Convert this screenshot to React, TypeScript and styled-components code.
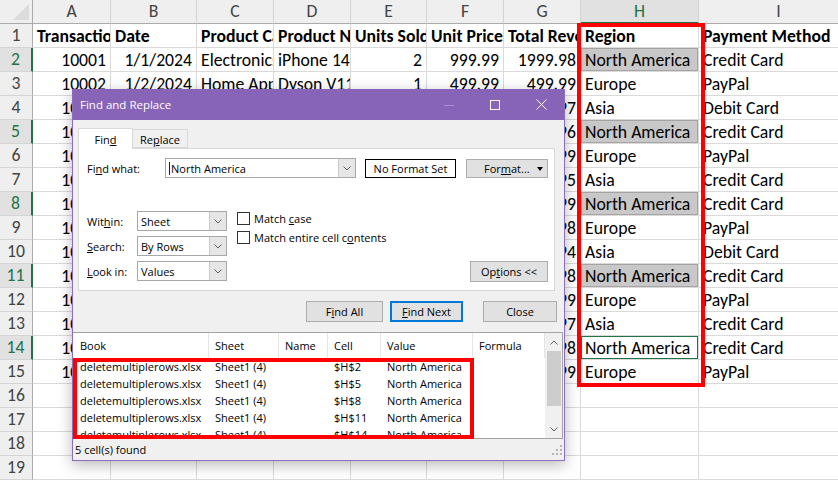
import React from "react";
import styled, { createGlobalStyle, css } from "styled-components";

type Align = "left" | "right" | "center";

const GlobalStyle = createGlobalStyle`
  html, body {
    margin: 0;
    padding: 0;
    background: #ffffff;
    overflow: hidden;
  }
  body {
    font-family: Calibri, Lato, "Liberation Sans", sans-serif;
  }
`;

const colWidths = [78, 86, 77, 77, 76, 77, 77, 118, 160];
const letters = ["A", "B", "C", "D", "E", "F", "G", "H", "I"];

const rows: string[][] = [
  ["Transaction ID", "Date", "Product Category", "Product Name", "Units Sold", "Unit Price", "Total Revenue", "Region", "Payment Method"],
  ["10001", "1/1/2024", "Electronics", "iPhone 14", "2", "999.99", "1999.98", "North America", "Credit Card"],
  ["10002", "1/2/2024", "Home Appliances", "Dyson V11", "1", "499.99", "499.99", "Europe", "PayPal"],
  ["10003", "1/3/2024", "Clothing", "Levi's 501", "3", "59.99", "179.97", "Asia", "Debit Card"],
  ["10004", "1/4/2024", "Books", "Dune", "4", "15.99", "63.96", "North America", "Credit Card"],
  ["10005", "1/5/2024", "Beauty", "Skincare Set", "1", "89.99", "89.99", "Europe", "PayPal"],
  ["10006", "1/6/2024", "Sports", "Wilson Ball", "5", "29.99", "149.95", "Asia", "Credit Card"],
  ["10007", "1/7/2024", "Electronics", "MacBook Pro", "1", "2499.99", "2499.99", "North America", "Credit Card"],
  ["10008", "1/8/2024", "Home Appliances", "Blueair", "2", "599.99", "1199.98", "Europe", "PayPal"],
  ["10009", "1/9/2024", "Clothing", "Nike Air", "6", "89.99", "539.94", "Asia", "Debit Card"],
  ["10010", "1/10/2024", "Books", "Atomic Habits", "2", "25.99", "51.98", "North America", "Credit Card"],
  ["10011", "1/11/2024", "Beauty", "Chanel No. 5", "1", "129.99", "129.99", "Europe", "PayPal"],
  ["10012", "1/12/2024", "Sports", "Babolat Pure", "3", "199.99", "599.97", "Asia", "Credit Card"],
  ["10013", "1/13/2024", "Electronics", "Galaxy S23", "2", "1099.99", "2199.98", "North America", "Credit Card"],
  ["10014", "1/14/2024", "Home Appliances", "Keurig", "1", "199.99", "199.99", "Europe", "PayPal"],
  ["", "", "", "", "", "", "", "", ""],
  ["", "", "", "", "", "", "", "", ""],
  ["", "", "", "", "", "", "", "", ""],
  ["", "", "", "", "", "", "", "", ""],
];

const foundRows = [2, 5, 8, 11, 14];
const currentRow = 14;

const results = [
  { book: "deletemultiplerows.xlsx", sheet: "Sheet1 (4)", name: "", cell: "$H$2", value: "North America" },
  { book: "deletemultiplerows.xlsx", sheet: "Sheet1 (4)", name: "", cell: "$H$5", value: "North America" },
  { book: "deletemultiplerows.xlsx", sheet: "Sheet1 (4)", name: "", cell: "$H$8", value: "North America" },
  { book: "deletemultiplerows.xlsx", sheet: "Sheet1 (4)", name: "", cell: "$H$11", value: "North America" },
  { book: "deletemultiplerows.xlsx", sheet: "Sheet1 (4)", name: "", cell: "$H$14", value: "North America" },
];

const resultCols = [135, 70, 49, 53, 92, 72];

/* ---------- spreadsheet ---------- */

const Page = styled.div`
  position: relative;
  width: 838px;
  height: 480px;
  overflow: hidden;
`;

const Sheet = styled.div`
  display: grid;
  grid-template-columns: 33px ${colWidths.map((w) => `${w}px`).join(" ")};
  grid-auto-rows: 24px;
  font-size: 17.7px;
`;

const Corner = styled.div`
  position: relative;
  background: #efefef;
  border-right: 1px solid #ababab;
  border-bottom: 1px solid #ababab;
  box-sizing: border-box;

  &::after {
    content: "";
    position: absolute;
    right: 3px;
    bottom: 3px;
    width: 16px;
    height: 16px;
    background: #dcdcdc;
    clip-path: polygon(100% 0, 100% 100%, 0 100%);
  }
`;

const ColHeader = styled.div<{ $active?: boolean }>`
  box-sizing: border-box;
  background: ${(p) => (p.$active ? "#e1e1e1" : "#efefef")};
  color: ${(p) => (p.$active ? "#217346" : "#444444")};
  border-right: 1px solid #d4d4d4;
  border-bottom: ${(p) => (p.$active ? "2px solid #217346" : "1px solid #ababab")};
  text-align: center;
  line-height: 23px;
`;

const RowHeader = styled.div<{ $active?: boolean }>`
  box-sizing: border-box;
  background: ${(p) => (p.$active ? "#e1e1e1" : "#efefef")};
  color: ${(p) => (p.$active ? "#217346" : "#444444")};
  border-bottom: 1px solid #d4d4d4;
  border-right: ${(p) => (p.$active ? "2px solid #217346" : "1px solid #ababab")};
  text-align: center;
  line-height: 23px;
`;

const Cell = styled.div<{ $align: Align; $bold?: boolean; $found?: boolean; $current?: boolean }>`
  box-sizing: border-box;
  border-right: 1px solid #dadada;
  border-bottom: 1px solid #dadada;
  padding: 0 4px;
  line-height: 24px;
  white-space: nowrap;
  overflow: hidden;
  color: #000000;
  text-align: ${(p) => p.$align};
  font-weight: ${(p) => (p.$bold ? 700 : 400)};
  ${(p) =>
    p.$found &&
    css`
      background: #c8c8c8;
      box-shadow: inset 0 0 0 1px #a4a4a4;
    `}
  ${(p) =>
    p.$current &&
    css`
      box-shadow: inset 0 0 0 1px #217346;
    `}
`;

const ColumnMark = styled.div`
  position: absolute;
  left: 577px;
  top: 23px;
  width: 128px;
  height: 364px;
  box-sizing: border-box;
  border: 4px solid #ff0000;
  pointer-events: none;
`;

/* ---------- dialog ---------- */

const Dialog = styled.div`
  position: absolute;
  left: 72px;
  top: 89px;
  width: 493px;
  height: 372px;
  box-sizing: border-box;
  border: 1px solid #8a6fbd;
  border-top: none;
  background: #f0f0f0;
  box-shadow: 0 4px 14px rgba(0, 0, 0, 0.28);
  display: flex;
  flex-direction: column;
  font-family: "Segoe UI", "Open Sans", "Noto Sans", sans-serif;
  font-size: 11px;
  color: #000000;
`;

const TitleBar = styled.div`
  height: 31px;
  flex: none;
  background: #8764b8;
  color: #ffffff;
  display: flex;
  align-items: center;
  padding-left: 7px;
  font-size: 11.5px;
`;

const Title = styled.div`
  flex: 1;
`;

const WinButton = styled.div`
  width: 46px;
  height: 31px;
  display: flex;
  align-items: center;
  justify-content: center;
`;

const Body = styled.div`
  flex: 1;
  display: flex;
  flex-direction: column;
`;

const TabStrip = styled.div`
  display: flex;
  align-items: flex-end;
  height: 20px;
  margin: 8px 0 0 5px;
  position: relative;
  z-index: 1;
`;

const Tab = styled.div<{ $selected?: boolean }>`
  box-sizing: border-box;
  width: 55px;
  height: ${(p) => (p.$selected ? "21px" : "19px")};
  margin-bottom: ${(p) => (p.$selected ? "-1px" : "0")};
  background: ${(p) => (p.$selected ? "#ffffff" : "#f0f0f0")};
  border: 1px solid #d9d9d9;
  border-bottom: ${(p) => (p.$selected ? "none" : "1px solid #d9d9d9")};
  ${(p) => !p.$selected && "border-left: none;"}
  display: flex;
  align-items: center;
  justify-content: center;
  padding-top: ${(p) => (p.$selected ? "0" : "1px")};
`;

const Panel = styled.div`
  box-sizing: border-box;
  width: 477px;
  height: 143px;
  margin-left: 5px;
  background: #ffffff;
  border: 1px solid #d9d9d9;
  padding: 9px 6px 8px 8px;
  display: flex;
  flex-direction: column;
`;

const FindRow = styled.div`
  display: flex;
  align-items: center;
  height: 20px;
`;

const FieldLabel = styled.div<{ $width: number }>`
  width: ${(p) => p.$width}px;
  flex: none;
  white-space: nowrap;
`;

const Combo = styled.div<{ $width: number }>`
  box-sizing: border-box;
  width: ${(p) => p.$width}px;
  height: 20px;
  border: 1px solid #a8a8a8;
  background: #ffffff;
  display: flex;
  align-items: center;
  flex: none;
`;

const ComboText = styled.div`
  flex: 1;
  padding-left: 3px;
  white-space: nowrap;
  display: flex;
  align-items: center;
`;

const Caret = styled.span`
  display: inline-block;
  width: 1px;
  height: 13px;
  background: #2b1b3d;
  margin-right: 1px;
`;

const DropButton = styled.div`
  width: 16px;
  height: 18px;
  background: #e6e6e6;
  border-left: 1px solid #c9c9c9;
  display: flex;
  align-items: center;
  justify-content: center;
`;

const FormatPreview = styled.div`
  box-sizing: border-box;
  width: 91px;
  height: 19px;
  margin-left: 9px;
  border: 1px solid #000000;
  display: flex;
  align-items: center;
  justify-content: center;
`;

const Button = styled.div<{ $width: number; $default?: boolean }>`
  box-sizing: border-box;
  width: ${(p) => p.$width}px;
  height: 21px;
  flex: none;
  background: #e1e1e1;
  border: ${(p) => (p.$default ? "2px solid #0078d7" : "1px solid #adadad")};
  display: flex;
  align-items: center;
  justify-content: center;
  white-space: nowrap;
`;

const FormatButton = styled(Button)`
  height: 19px;
  margin-left: 10px;
  justify-content: flex-start;
  padding-left: 17px;
  position: relative;
`;

const SplitArrow = styled.span`
  position: absolute;
  right: 4px;
  top: 7px;
  width: 0;
  height: 0;
  border-left: 3px solid transparent;
  border-right: 3px solid transparent;
  border-top: 4px solid #000000;
`;

const OptionsArea = styled.div`
  display: flex;
  align-items: flex-start;
  margin-top: 33px;
  flex: 1;
`;

const OptionGrid = styled.div`
  display: grid;
  grid-template-columns: 50px 90px;
  grid-auto-rows: 20px;
  row-gap: 5px;
  align-items: center;
`;

const Checks = styled.div`
  display: flex;
  flex-direction: column;
  gap: 6px;
  margin: 1px 0 0 10px;
`;

const CheckRow = styled.label`
  display: flex;
  align-items: center;
  height: 13px;
  gap: 4px;
  white-space: nowrap;
`;

const Box = styled.span`
  box-sizing: border-box;
  width: 13px;
  height: 13px;
  border: 1px solid #333333;
  background: #ffffff;
  flex: none;
`;

const OptionsButton = styled(Button)`
  margin-left: auto;
  align-self: flex-end;
`;

const ButtonRow = styled.div`
  display: flex;
  justify-content: flex-end;
  gap: 7px;
  margin: 10px 7px 0 0;
  height: 21px;
`;

const CloseGap = styled.div`
  width: 6px;
`;

const Results = styled.div`
  position: relative;
  box-sizing: border-box;
  margin: 10px 1px 0 0;
  height: 107px;
  border: 1px solid #a3a3a3;
  border-left: none;
  background: #ffffff;
  display: flex;
`;

const ResultsTable = styled.div`
  flex: 1;
  overflow: hidden;
  padding-left: 1px;
`;

const HeaderRow = styled.div`
  display: flex;
  height: 25px;
`;

const HeaderCell = styled.div<{ $width: number }>`
  box-sizing: border-box;
  width: ${(p) => p.$width}px;
  flex: none;
  padding-left: 6px;
  border-right: 1px solid #e5e5e5;
  display: flex;
  align-items: center;
`;

const DataRow = styled.div`
  display: flex;
  height: 17px;
  align-items: center;
`;

const DataCell = styled.div<{ $width: number }>`
  width: ${(p) => p.$width}px;
  flex: none;
  padding-left: 6px;
  box-sizing: border-box;
  white-space: nowrap;
  overflow: hidden;
`;

const ScrollBar = styled.div`
  width: 17px;
  background: #f0f0f0;
  display: flex;
  flex-direction: column;
  align-items: center;
`;

const ScrollArrow = styled.div`
  height: 18px;
  width: 17px;
  display: flex;
  align-items: center;
  justify-content: center;
`;

const Thumb = styled.div`
  width: 14px;
  height: 55px;
  background: #cdcdcd;
`;

const ScrollTrack = styled.div`
  flex: 1;
`;

const ResultsMark = styled.div`
  position: absolute;
  left: 0;
  top: 25px;
  width: 401px;
  height: 81px;
  box-sizing: border-box;
  border: 4px solid #ff0000;
  pointer-events: none;
`;

const StatusBar = styled.div`
  height: 21px;
  display: flex;
  align-items: center;
  justify-content: space-between;
  padding: 0 2px 0 2px;
`;

const Accel = styled.span`
  text-decoration: underline;
  text-underline-offset: 1px;
`;

function Chevron({ up }: { up?: boolean }) {
  const pts = up ? "0.5,4.5 4,1 7.5,4.5" : "0.5,0.5 4,4 7.5,0.5";
  return (
    <svg width="8" height="5" viewBox="0 0 8 5">
      <polyline points={pts} fill="none" stroke="#606060" strokeWidth="1" />
    </svg>
  );
}

function Select({ value, width }: { value: string; width: number }) {
  return (
    <Combo $width={width}>
      <ComboText>{value}</ComboText>
      <DropButton>
        <Chevron />
      </DropButton>
    </Combo>
  );
}

function Grip() {
  const dots = [
    [8, 0],
    [4, 4],
    [8, 4],
    [0, 8],
    [4, 8],
    [8, 8],
  ];
  return (
    <svg width="10" height="10" viewBox="0 0 10 10">
      {dots.map(([x, y]) => (
        <rect key={`${x}-${y}`} x={x} y={y} width="2" height="2" fill="#b4b4b4" />
      ))}
    </svg>
  );
}

function FindReplaceDialog() {
  return (
    <Dialog>
      <TitleBar>
        <Title>Find and Replace</Title>
        <WinButton>
          <svg width="10" height="10" viewBox="0 0 10 10">
            <line x1="0" y1="5.5" x2="10" y2="5.5" stroke="#a991d0" strokeWidth="1" />
          </svg>
        </WinButton>
        <WinButton>
          <svg width="10" height="10" viewBox="0 0 10 10">
            <rect x="0.5" y="0.5" width="9" height="9" fill="none" stroke="#ffffff" strokeWidth="1" />
          </svg>
        </WinButton>
        <WinButton>
          <svg width="11" height="11" viewBox="0 0 11 11">
            <path d="M0.5 0.5 L10.5 10.5 M10.5 0.5 L0.5 10.5" stroke="#ffffff" strokeWidth="1" />
          </svg>
        </WinButton>
      </TitleBar>
      <Body>
        <TabStrip>
          <Tab $selected>
            <span>
              Fin<Accel>d</Accel>
            </span>
          </Tab>
          <Tab>
            <span>
              Re<Accel>p</Accel>lace
            </span>
          </Tab>
        </TabStrip>
        <Panel>
          <FindRow>
            <FieldLabel $width={78}>
              Fi<Accel>n</Accel>d what:
            </FieldLabel>
            <Combo $width={191}>
              <ComboText>
                <Caret />
                North America
              </ComboText>
              <DropButton>
                <Chevron />
              </DropButton>
            </Combo>
            <FormatPreview>No Format Set</FormatPreview>
            <FormatButton $width={82}>
              <span>
                For<Accel>m</Accel>at...
              </span>
              <SplitArrow />
            </FormatButton>
          </FindRow>
          <OptionsArea>
            <OptionGrid>
              <FieldLabel $width={50}>
                Wit<Accel>h</Accel>in:
              </FieldLabel>
              <Select value="Sheet" width={90} />
              <FieldLabel $width={50}>
                <Accel>S</Accel>earch:
              </FieldLabel>
              <Select value="By Rows" width={90} />
              <FieldLabel $width={50}>
                <Accel>L</Accel>ook in:
              </FieldLabel>
              <Select value="Values" width={90} />
            </OptionGrid>
            <Checks>
              <CheckRow>
                <Box />
                <span>
                  Match <Accel>c</Accel>ase
                </span>
              </CheckRow>
              <CheckRow>
                <Box />
                <span>
                  Match entire cell c<Accel>o</Accel>ntents
                </span>
              </CheckRow>
            </Checks>
            <OptionsButton $width={78}>
              <span>
                Op<Accel>t</Accel>ions &lt;&lt;
              </span>
            </OptionsButton>
          </OptionsArea>
        </Panel>
        <ButtonRow>
          <Button $width={77}>
            <span>
              F<Accel>i</Accel>nd All
            </span>
          </Button>
          <Button $width={73} $default>
            <span>
              <Accel>F</Accel>ind Next
            </span>
          </Button>
          <CloseGap />
          <Button $width={74}>Close</Button>
        </ButtonRow>
        <Results>
          <ResultsTable>
            <HeaderRow>
              {["Book", "Sheet", "Name", "Cell", "Value", "Formula"].map((h, i) => (
                <HeaderCell key={h} $width={resultCols[i]}>
                  {h}
                </HeaderCell>
              ))}
            </HeaderRow>
            {results.map((r) => (
              <DataRow key={r.cell}>
                <DataCell $width={resultCols[0]}>{r.book}</DataCell>
                <DataCell $width={resultCols[1]}>{r.sheet}</DataCell>
                <DataCell $width={resultCols[2]}>{r.name}</DataCell>
                <DataCell $width={resultCols[3]}>{r.cell}</DataCell>
                <DataCell $width={resultCols[4]}>{r.value}</DataCell>
                <DataCell $width={resultCols[5]} />
              </DataRow>
            ))}
          </ResultsTable>
          <ScrollBar>
            <ScrollArrow>
              <Chevron up />
            </ScrollArrow>
            <Thumb />
            <ScrollTrack />
            <ScrollArrow>
              <Chevron />
            </ScrollArrow>
          </ScrollBar>
          <ResultsMark />
        </Results>
        <StatusBar>
          <span>5 cell(s) found</span>
          <Grip />
        </StatusBar>
      </Body>
    </Dialog>
  );
}

const isNumeric = (v: string) => /^[\d./]+$/.test(v);

export default function App() {
  return (
    <Page>
      <GlobalStyle />
      <Sheet>
        <Corner />
        {letters.map((l) => (
          <ColHeader key={l} $active={l === "H"}>
            {l}
          </ColHeader>
        ))}
        {rows.map((row, ri) => {
          const n = ri + 1;
          const active = foundRows.includes(n);
          return (
            <React.Fragment key={n}>
              <RowHeader $active={active}>{n}</RowHeader>
              {row.map((v, ci) => {
                const isH = ci === 7;
                return (
                  <Cell
                    key={ci}
                    $align={isNumeric(v) ? "right" : "left"}
                    $bold={n === 1}
                    $found={isH && active && n !== currentRow}
                    $current={isH && n === currentRow}
                  >
                    {v}
                  </Cell>
                );
              })}
            </React.Fragment>
          );
        })}
      </Sheet>
      <ColumnMark />
      <FindReplaceDialog />
    </Page>
  );
}
